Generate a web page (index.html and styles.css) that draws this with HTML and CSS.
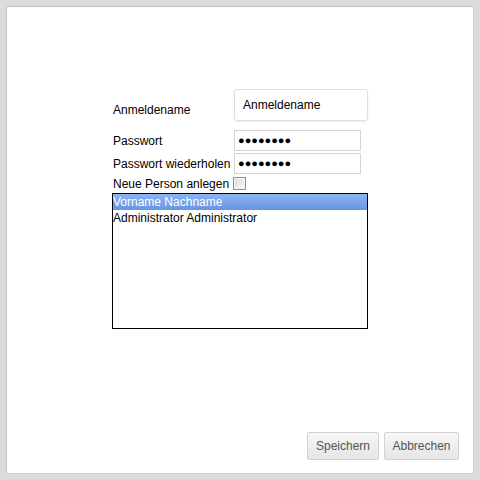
FILE: index.html
```html
<!DOCTYPE html>
<html>
<head>
<meta charset="utf-8">
<link rel="stylesheet" href="styles.css">
</head>
<body>
<div class="panel">
  <div class="form">
    <div class="row row-login">
      <span class="label label-login">Anmeldename</span>
      <div class="login-input">Anmeldename</div>
    </div>
    <div class="row row-pass">
      <span class="label">Passwort</span>
      <div class="pass-input">●●●●●●●●</div>
    </div>
    <div class="row row-pass2">
      <span class="label">Passwort wiederholen</span>
      <div class="pass-input">●●●●●●●●</div>
    </div>
    <div class="row row-check">
      <span class="label">Neue Person anlegen</span>
      <span class="checkbox"></span>
    </div>
    <div class="listbox">
      <div class="option selected">Vorname Nachname</div>
      <div class="option">Administrator Administrator</div>
    </div>
  </div>
  <div class="buttons">
    <button class="btn btn-save">Speichern</button>
    <button class="btn btn-cancel">Abbrechen</button>
  </div>
</div>
</body>
</html>
```
FILE: styles.css
```css
html, body {
  margin: 0;
  padding: 0;
}
body {
  background: #dcdcdc;
  padding: 6px;
  font-family: "Liberation Sans", Arial, sans-serif;
  font-size: 12px;
  color: #000;
}
.panel {
  box-sizing: border-box;
  width: 468px;
  height: 468px;
  background: #fff;
  border: 1px solid #c2c2c2;
  border-right-color: #cfcfcf;
  border-bottom-color: #cfcfcf;
  display: flex;
  flex-direction: column;
}
.form {
  margin-top: 82px;
  margin-left: 105px;
  display: flex;
  flex-direction: column;
  width: 256px;
}
.row {
  display: flex;
  align-items: center;
}
.label {
  width: 121px;
  flex: none;
  white-space: nowrap;
  padding-left: 1px;
}
.row-login {
  height: 32px;
  align-items: flex-end;
}
.label-login {
  padding-bottom: 4px;
}
.login-input {
  box-sizing: border-box;
  width: 136px;
  height: 32px;
  border: 1px solid #dedede;
  border-radius: 3px;
  box-shadow: 0 1px 2px rgba(0,0,0,0.08);
  padding: 8px 0 0 8px;
  line-height: 14px;
  align-self: stretch;
}
.row-pass {
  margin-top: 9px;
}
.row-pass2 {
  margin-top: 2px;
}
.pass-input {
  box-sizing: border-box;
  width: 127px;
  height: 21px;
  border: 1px solid #d4d4d4;
  padding-left: 3px;
  font-size: 11px;
  line-height: 19px;
  letter-spacing: 0px;
}
.row-check {
  margin-top: 3px;
  height: 13px;
}
.checkbox {
  box-sizing: border-box;
  width: 13px;
  height: 13px;
  margin-left: -1px;
  border: 1px solid #8f8f8f;
  background: linear-gradient(135deg, #dcdcdc, #f8f8f8);
  box-shadow: inset 0 0 0 1px #f4f4f4;
}
.listbox {
  box-sizing: border-box;
  margin-top: 3px;
  width: 256px;
  height: 136px;
  border: 1px solid #000;
}
.option {
  height: 16px;
  line-height: 16px;
  white-space: nowrap;
}
.option.selected {
  color: #fff;
  background: linear-gradient(#8cb4f2, #6795e4);
}
.buttons {
  margin-top: auto;
  margin-right: 14px;
  margin-bottom: 13px;
  display: flex;
  justify-content: flex-end;
  gap: 5px;
}
.btn {
  box-sizing: border-box;
  height: 28px;
  border: 1px solid #d3d3d3;
  border-radius: 2px;
  background: linear-gradient(#f7f7f7, #e5e5e5);
  font-family: "Liberation Sans", Arial, sans-serif;
  font-size: 12px;
  color: #555;
  padding: 0;
}
.btn-save {
  width: 72px;
}
.btn-cancel {
  width: 75px;
}
```
